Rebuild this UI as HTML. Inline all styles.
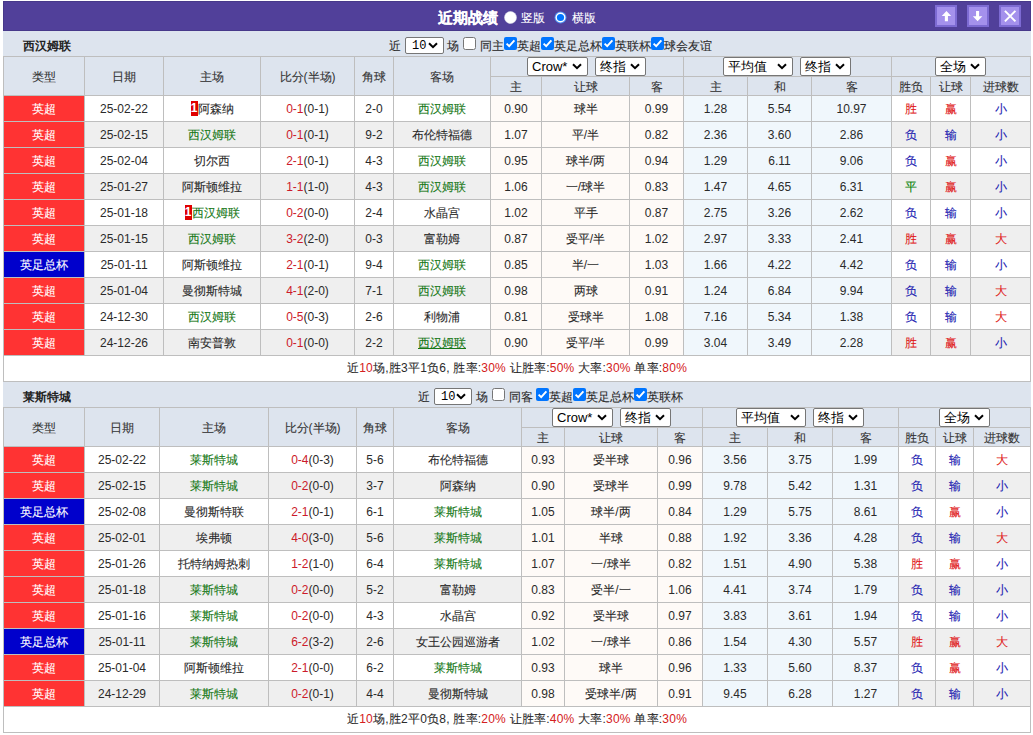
<!DOCTYPE html>
<html><head><meta charset="utf-8"><style>
html,body{margin:0;padding:0;background:#fff;}
body{width:1033px;height:735px;overflow:hidden;position:relative;font-family:"Liberation Sans",sans-serif;font-size:12px;color:#2a2a2a;}
body>div,body>svg{position:absolute;}
.t{text-align:center;white-space:nowrap;}
.c{-webkit-text-stroke:0.1px currentColor;}
.b .c{-webkit-text-stroke:0;}
.ttl .c{-webkit-text-stroke:0.15px #fff;}
.b{font-weight:bold;}
.sel{position:absolute;background:#fff;border:1px solid #767676;border-radius:2px;color:#000;}
.sel .sl{position:absolute;left:4px;top:0;}
.chev{position:absolute;}
.sel .num{font-family:"Liberation Mono",monospace;font-size:12px;left:6px;top:1px;}
.cb{position:absolute;}
.bd{display:inline-block;background:#e00000;color:#fff;font-weight:bold;width:7px;height:15px;line-height:15px;text-align:center;vertical-align:middle;position:relative;top:-1px;font-size:12px;}
</style></head><body>
<div style="left:3px;top:1px;width:1028px;height:30px;background:#51409a;box-sizing:border-box;border:1px solid #47398a"></div>
<div style="left:3px;top:31px;width:1028px;height:1px;background:#e6e2f6"></div>
<div class="t b ttl" style="left:438px;top:2px;height:30px;line-height:31px;font-size:15px;color:#fff;text-align:left;white-space:nowrap;-webkit-text-stroke:0.35px #fff"><span class="c">近期战绩</span></div>
<svg style="left:504px;top:11px" width="13" height="13" viewBox="0 0 13 13"><circle cx="6.5" cy="6.5" r="6" fill="#fff" stroke="#d8d8e8" stroke-width="0.6"/></svg>
<div class="t" style="left:521px;top:3px;height:30px;line-height:31px;color:#fff;text-align:left;white-space:nowrap"><span class="c">竖版</span></div>
<svg style="left:554px;top:11px" width="13" height="13" viewBox="0 0 13 13"><circle cx="6.5" cy="6.5" r="6" fill="#4a8cf0"/><circle cx="6.5" cy="6.5" r="5" fill="#fff"/><circle cx="6.5" cy="6.5" r="3.6" fill="#0075ff"/></svg>
<div class="t" style="left:572px;top:3px;height:30px;line-height:31px;color:#fff;text-align:left;white-space:nowrap"><span class="c">横版</span></div>
<svg style="left:935px;top:5px" width="22" height="22" viewBox="0 0 22 22"><rect x="0" y="0" width="22" height="22" fill="#7d6bd3"/><rect x="2" y="2" width="18" height="18" fill="#a491ec"/><path d="M11.45 6 L16.2 10.9 L12.95 10.9 L12.95 16.2 L9.85 16.2 L9.85 10.9 L6.75 10.9 Z" fill="#fff"/></svg>
<svg style="left:967px;top:5px" width="22" height="22" viewBox="0 0 22 22"><rect x="0" y="0" width="22" height="22" fill="#7d6bd3"/><rect x="2" y="2" width="18" height="18" fill="#a491ec"/><path d="M10.6 16.2 L15.35 11.25 L12.1 11.25 L12.1 5.9 L9.05 5.9 L9.05 11.25 L5.85 11.25 Z" fill="#fff"/></svg>
<svg style="left:999px;top:5px" width="22" height="22" viewBox="0 0 22 22"><rect x="0" y="0" width="22" height="22" fill="#7d6bd3"/><rect x="2" y="2" width="18" height="18" fill="#a491ec"/><path d="M5.9 5.9 L16.4 16.4 M16.4 5.9 L5.9 16.4" stroke="#fff" stroke-width="2"/></svg>
<div style="left:3px;top:31px;width:1028px;height:25px;background:#dde4ee;"></div>
<div class="t b" style="left:23px;top:33px;height:25px;line-height:26px;font-size:12px;color:#222"><span class="c">西汉姆联</span></div>
<div class="t" style="left:389px;top:38px;height:16px;line-height:16px;text-align:left;white-space:nowrap;"><span class="c">近</span></div>
<div class="sel" style="left:405px;top:37px;width:37px;height:15px;line-height:15px;font-size:13px"><span class="sl num">10</span><svg class="chev" width="10" height="7" viewBox="0 0 10 7" style="right:5px;top:4px"><path d="M1 1.2 L5 5.2 L9 1.2" fill="none" stroke="#000" stroke-width="2"/></svg></div>
<div class="t" style="left:447px;top:38px;height:16px;line-height:16px;text-align:left;white-space:nowrap;"><span class="c">场</span></div>
<svg class="cb" style="left:463px;top:37px" width="13" height="13" viewBox="0 0 13 13"><rect x="0.5" y="0.5" width="12" height="12" rx="2" fill="#fff" stroke="#767676"/></svg>
<div class="t" style="left:480px;top:38px;height:16px;line-height:16px;text-align:left;white-space:nowrap;"><span class="c">同主</span></div>
<svg class="cb" style="left:504px;top:37px" width="13" height="13" viewBox="0 0 13 13"><rect x="0" y="0" width="13" height="13" rx="2" fill="#0075ff"/><path d="M2.6 6.6 L5.2 9.2 L10.4 3.4" fill="none" stroke="#fff" stroke-width="1.9"/></svg>
<div class="t" style="left:517px;top:38px;height:16px;line-height:16px;text-align:left;white-space:nowrap;"><span class="c">英超</span></div>
<svg class="cb" style="left:541px;top:37px" width="13" height="13" viewBox="0 0 13 13"><rect x="0" y="0" width="13" height="13" rx="2" fill="#0075ff"/><path d="M2.6 6.6 L5.2 9.2 L10.4 3.4" fill="none" stroke="#fff" stroke-width="1.9"/></svg>
<div class="t" style="left:554px;top:38px;height:16px;line-height:16px;text-align:left;white-space:nowrap;"><span class="c">英足总杯</span></div>
<svg class="cb" style="left:602px;top:37px" width="13" height="13" viewBox="0 0 13 13"><rect x="0" y="0" width="13" height="13" rx="2" fill="#0075ff"/><path d="M2.6 6.6 L5.2 9.2 L10.4 3.4" fill="none" stroke="#fff" stroke-width="1.9"/></svg>
<div class="t" style="left:615px;top:38px;height:16px;line-height:16px;text-align:left;white-space:nowrap;"><span class="c">英联杯</span></div>
<svg class="cb" style="left:651px;top:37px" width="13" height="13" viewBox="0 0 13 13"><rect x="0" y="0" width="13" height="13" rx="2" fill="#0075ff"/><path d="M2.6 6.6 L5.2 9.2 L10.4 3.4" fill="none" stroke="#fff" stroke-width="1.9"/></svg>
<div class="t" style="left:664px;top:38px;height:16px;line-height:16px;text-align:left;white-space:nowrap;"><span class="c">球会友谊</span></div>
<div style="left:3px;top:56px;width:1028px;height:39px;background:#dde4ee;"></div>
<div style="left:3px;top:95px;width:1028px;height:26px;background:#ffffff;"></div>
<div style="left:490px;top:95px;width:193px;height:26px;background:#fefaf7;"></div>
<div style="left:683px;top:95px;width:208px;height:26px;background:#f0f7fc;"></div>
<div style="left:4px;top:95px;width:80px;height:26px;background:#ff3333;"></div>
<div style="left:3px;top:121px;width:1028px;height:26px;background:#efefef;"></div>
<div style="left:490px;top:121px;width:193px;height:26px;background:#fefaf7;"></div>
<div style="left:683px;top:121px;width:208px;height:26px;background:#f0f7fc;"></div>
<div style="left:4px;top:121px;width:80px;height:26px;background:#ff3333;"></div>
<div style="left:3px;top:147px;width:1028px;height:26px;background:#ffffff;"></div>
<div style="left:490px;top:147px;width:193px;height:26px;background:#fefaf7;"></div>
<div style="left:683px;top:147px;width:208px;height:26px;background:#f0f7fc;"></div>
<div style="left:4px;top:147px;width:80px;height:26px;background:#ff3333;"></div>
<div style="left:3px;top:173px;width:1028px;height:26px;background:#efefef;"></div>
<div style="left:490px;top:173px;width:193px;height:26px;background:#fefaf7;"></div>
<div style="left:683px;top:173px;width:208px;height:26px;background:#f0f7fc;"></div>
<div style="left:4px;top:173px;width:80px;height:26px;background:#ff3333;"></div>
<div style="left:3px;top:199px;width:1028px;height:26px;background:#ffffff;"></div>
<div style="left:490px;top:199px;width:193px;height:26px;background:#fefaf7;"></div>
<div style="left:683px;top:199px;width:208px;height:26px;background:#f0f7fc;"></div>
<div style="left:4px;top:199px;width:80px;height:26px;background:#ff3333;"></div>
<div style="left:3px;top:225px;width:1028px;height:26px;background:#efefef;"></div>
<div style="left:490px;top:225px;width:193px;height:26px;background:#fefaf7;"></div>
<div style="left:683px;top:225px;width:208px;height:26px;background:#f0f7fc;"></div>
<div style="left:4px;top:225px;width:80px;height:26px;background:#ff3333;"></div>
<div style="left:3px;top:251px;width:1028px;height:26px;background:#ffffff;"></div>
<div style="left:490px;top:251px;width:193px;height:26px;background:#fefaf7;"></div>
<div style="left:683px;top:251px;width:208px;height:26px;background:#f0f7fc;"></div>
<div style="left:4px;top:251px;width:80px;height:26px;background:#0000cc;"></div>
<div style="left:3px;top:277px;width:1028px;height:26px;background:#efefef;"></div>
<div style="left:490px;top:277px;width:193px;height:26px;background:#fefaf7;"></div>
<div style="left:683px;top:277px;width:208px;height:26px;background:#f0f7fc;"></div>
<div style="left:4px;top:277px;width:80px;height:26px;background:#ff3333;"></div>
<div style="left:3px;top:303px;width:1028px;height:26px;background:#ffffff;"></div>
<div style="left:490px;top:303px;width:193px;height:26px;background:#fefaf7;"></div>
<div style="left:683px;top:303px;width:208px;height:26px;background:#f0f7fc;"></div>
<div style="left:4px;top:303px;width:80px;height:26px;background:#ff3333;"></div>
<div style="left:3px;top:329px;width:1028px;height:26px;background:#efefef;"></div>
<div style="left:490px;top:329px;width:193px;height:26px;background:#fefaf7;"></div>
<div style="left:683px;top:329px;width:208px;height:26px;background:#f0f7fc;"></div>
<div style="left:4px;top:329px;width:80px;height:26px;background:#ff3333;"></div>
<div style="left:3px;top:56px;width:1028px;height:1px;background:#bebebe;"></div>
<div style="left:490px;top:76px;width:540px;height:1px;background:#bebebe;"></div>
<div style="left:3px;top:95px;width:1028px;height:1px;background:#bebebe;"></div>
<div style="left:3px;top:121px;width:1028px;height:1px;background:#bebebe;"></div>
<div style="left:3px;top:147px;width:1028px;height:1px;background:#bebebe;"></div>
<div style="left:3px;top:173px;width:1028px;height:1px;background:#bebebe;"></div>
<div style="left:3px;top:199px;width:1028px;height:1px;background:#bebebe;"></div>
<div style="left:3px;top:225px;width:1028px;height:1px;background:#bebebe;"></div>
<div style="left:3px;top:251px;width:1028px;height:1px;background:#bebebe;"></div>
<div style="left:3px;top:277px;width:1028px;height:1px;background:#bebebe;"></div>
<div style="left:3px;top:303px;width:1028px;height:1px;background:#bebebe;"></div>
<div style="left:3px;top:329px;width:1028px;height:1px;background:#bebebe;"></div>
<div style="left:3px;top:355px;width:1028px;height:1px;background:#bebebe;"></div>
<div style="left:3px;top:381px;width:1028px;height:1px;background:#bebebe;"></div>
<div style="left:3px;top:56px;width:1px;height:299px;background:#bebebe;"></div>
<div style="left:84px;top:56px;width:1px;height:299px;background:#bebebe;"></div>
<div style="left:163px;top:56px;width:1px;height:299px;background:#bebebe;"></div>
<div style="left:260px;top:56px;width:1px;height:299px;background:#bebebe;"></div>
<div style="left:354px;top:56px;width:1px;height:299px;background:#bebebe;"></div>
<div style="left:393px;top:56px;width:1px;height:299px;background:#bebebe;"></div>
<div style="left:490px;top:56px;width:1px;height:299px;background:#bebebe;"></div>
<div style="left:541px;top:76px;width:1px;height:279px;background:#bebebe;"></div>
<div style="left:629px;top:76px;width:1px;height:279px;background:#bebebe;"></div>
<div style="left:683px;top:56px;width:1px;height:299px;background:#bebebe;"></div>
<div style="left:747px;top:76px;width:1px;height:279px;background:#bebebe;"></div>
<div style="left:811px;top:76px;width:1px;height:279px;background:#bebebe;"></div>
<div style="left:891px;top:56px;width:1px;height:299px;background:#bebebe;"></div>
<div style="left:930px;top:76px;width:1px;height:279px;background:#bebebe;"></div>
<div style="left:970px;top:76px;width:1px;height:279px;background:#bebebe;"></div>
<div style="left:1030px;top:56px;width:1px;height:299px;background:#bebebe;"></div>
<div style="left:3px;top:355px;width:1px;height:27px;background:#bebebe;"></div>
<div style="left:1030px;top:355px;width:1px;height:27px;background:#bebebe;"></div>
<div class="t" style="left:4px;top:58px;width:80px;height:38px;line-height:38px;color:#333"><span class="c">类型</span></div>
<div class="t" style="left:85px;top:58px;width:78px;height:38px;line-height:38px;color:#333"><span class="c">日期</span></div>
<div class="t" style="left:164px;top:58px;width:96px;height:38px;line-height:38px;color:#333"><span class="c">主场</span></div>
<div class="t" style="left:261px;top:58px;width:93px;height:38px;line-height:38px;color:#333"><span class="c">比分</span>(<span class="c">半场</span>)</div>
<div class="t" style="left:355px;top:58px;width:38px;height:38px;line-height:38px;color:#333"><span class="c">角球</span></div>
<div class="t" style="left:394px;top:58px;width:96px;height:38px;line-height:38px;color:#333"><span class="c">客场</span></div>
<div class="t" style="left:491px;top:78px;width:50px;height:18px;line-height:18px;color:#333"><span class="c">主</span></div>
<div class="t" style="left:542px;top:78px;width:87px;height:18px;line-height:18px;color:#333"><span class="c">让球</span></div>
<div class="t" style="left:630px;top:78px;width:53px;height:18px;line-height:18px;color:#333"><span class="c">客</span></div>
<div class="t" style="left:684px;top:78px;width:63px;height:18px;line-height:18px;color:#333"><span class="c">主</span></div>
<div class="t" style="left:748px;top:78px;width:63px;height:18px;line-height:18px;color:#333"><span class="c">和</span></div>
<div class="t" style="left:812px;top:78px;width:79px;height:18px;line-height:18px;color:#333"><span class="c">客</span></div>
<div class="t" style="left:892px;top:78px;width:38px;height:18px;line-height:18px;color:#333"><span class="c">胜负</span></div>
<div class="t" style="left:931px;top:78px;width:39px;height:18px;line-height:18px;color:#333"><span class="c">让球</span></div>
<div class="t" style="left:971px;top:78px;width:59px;height:18px;line-height:18px;color:#333"><span class="c">进球数</span></div>
<div class="sel" style="left:527px;top:57px;width:59px;height:17px;line-height:17px;font-size:13px"><span class="sl">Crow*</span><svg class="chev" width="10" height="7" viewBox="0 0 10 7" style="right:5px;top:5px"><path d="M1 1.2 L5 5.2 L9 1.2" fill="none" stroke="#000" stroke-width="2"/></svg></div>
<div class="sel" style="left:595px;top:57px;width:49px;height:17px;line-height:17px;font-size:13px"><span class="sl">终指</span><svg class="chev" width="10" height="7" viewBox="0 0 10 7" style="right:5px;top:5px"><path d="M1 1.2 L5 5.2 L9 1.2" fill="none" stroke="#000" stroke-width="2"/></svg></div>
<div class="sel" style="left:723px;top:57px;width:68px;height:17px;line-height:17px;font-size:13px"><span class="sl">平均值</span><svg class="chev" width="10" height="7" viewBox="0 0 10 7" style="right:5px;top:5px"><path d="M1 1.2 L5 5.2 L9 1.2" fill="none" stroke="#000" stroke-width="2"/></svg></div>
<div class="sel" style="left:800px;top:57px;width:49px;height:17px;line-height:17px;font-size:13px"><span class="sl">终指</span><svg class="chev" width="10" height="7" viewBox="0 0 10 7" style="right:5px;top:5px"><path d="M1 1.2 L5 5.2 L9 1.2" fill="none" stroke="#000" stroke-width="2"/></svg></div>
<div class="sel" style="left:935px;top:57px;width:49px;height:17px;line-height:17px;font-size:13px"><span class="sl">全场</span><svg class="chev" width="10" height="7" viewBox="0 0 10 7" style="right:5px;top:5px"><path d="M1 1.2 L5 5.2 L9 1.2" fill="none" stroke="#000" stroke-width="2"/></svg></div>
<div class="t" style="left:4px;top:97px;width:80px;height:25px;line-height:25px;color:#fff"><span class="c">英超</span></div>
<div class="t" style="left:85px;top:97px;width:78px;height:25px;line-height:25px;">25-02-22</div>
<div class="t" style="left:164px;top:97px;width:96px;height:25px;line-height:25px;"><span class="bd">1</span><span class="c">阿森纳</span></div>
<div class="t" style="left:261px;top:97px;width:93px;height:25px;line-height:25px;"><span style="color:#cc1a2a">0-1</span>(0-1)</div>
<div class="t" style="left:355px;top:97px;width:38px;height:25px;line-height:25px;">2-0</div>
<div class="t" style="left:394px;top:97px;width:96px;height:25px;line-height:25px;"><span style="color:#167816"><span class="c">西汉姆联</span></span></div>
<div class="t" style="left:491px;top:97px;width:50px;height:25px;line-height:25px;">0.90</div>
<div class="t" style="left:542px;top:97px;width:87px;height:25px;line-height:25px;"><span class="c">球半</span></div>
<div class="t" style="left:630px;top:97px;width:53px;height:25px;line-height:25px;">0.99</div>
<div class="t" style="left:684px;top:97px;width:63px;height:25px;line-height:25px;">1.28</div>
<div class="t" style="left:748px;top:97px;width:63px;height:25px;line-height:25px;">5.54</div>
<div class="t" style="left:812px;top:97px;width:79px;height:25px;line-height:25px;">10.97</div>
<div class="t" style="left:892px;top:97px;width:38px;height:25px;line-height:25px;"><span style="color:#e01818"><span class="c">胜</span></span></div>
<div class="t" style="left:931px;top:97px;width:39px;height:25px;line-height:25px;"><span style="color:#e01818"><span class="c">赢</span></span></div>
<div class="t" style="left:971px;top:97px;width:59px;height:25px;line-height:25px;"><span style="color:#1818b0"><span class="c">小</span></span></div>
<div class="t" style="left:4px;top:123px;width:80px;height:25px;line-height:25px;color:#fff"><span class="c">英超</span></div>
<div class="t" style="left:85px;top:123px;width:78px;height:25px;line-height:25px;">25-02-15</div>
<div class="t" style="left:164px;top:123px;width:96px;height:25px;line-height:25px;"><span style="color:#167816"><span class="c">西汉姆联</span></span></div>
<div class="t" style="left:261px;top:123px;width:93px;height:25px;line-height:25px;"><span style="color:#cc1a2a">0-1</span>(0-1)</div>
<div class="t" style="left:355px;top:123px;width:38px;height:25px;line-height:25px;">9-2</div>
<div class="t" style="left:394px;top:123px;width:96px;height:25px;line-height:25px;"><span class="c">布伦特福德</span></div>
<div class="t" style="left:491px;top:123px;width:50px;height:25px;line-height:25px;">1.07</div>
<div class="t" style="left:542px;top:123px;width:87px;height:25px;line-height:25px;"><span class="c">平</span>/<span class="c">半</span></div>
<div class="t" style="left:630px;top:123px;width:53px;height:25px;line-height:25px;">0.82</div>
<div class="t" style="left:684px;top:123px;width:63px;height:25px;line-height:25px;">2.36</div>
<div class="t" style="left:748px;top:123px;width:63px;height:25px;line-height:25px;">3.60</div>
<div class="t" style="left:812px;top:123px;width:79px;height:25px;line-height:25px;">2.86</div>
<div class="t" style="left:892px;top:123px;width:38px;height:25px;line-height:25px;"><span style="color:#1818b0"><span class="c">负</span></span></div>
<div class="t" style="left:931px;top:123px;width:39px;height:25px;line-height:25px;"><span style="color:#1818b0"><span class="c">输</span></span></div>
<div class="t" style="left:971px;top:123px;width:59px;height:25px;line-height:25px;"><span style="color:#1818b0"><span class="c">小</span></span></div>
<div class="t" style="left:4px;top:149px;width:80px;height:25px;line-height:25px;color:#fff"><span class="c">英超</span></div>
<div class="t" style="left:85px;top:149px;width:78px;height:25px;line-height:25px;">25-02-04</div>
<div class="t" style="left:164px;top:149px;width:96px;height:25px;line-height:25px;"><span class="c">切尔西</span></div>
<div class="t" style="left:261px;top:149px;width:93px;height:25px;line-height:25px;"><span style="color:#cc1a2a">2-1</span>(0-1)</div>
<div class="t" style="left:355px;top:149px;width:38px;height:25px;line-height:25px;">4-3</div>
<div class="t" style="left:394px;top:149px;width:96px;height:25px;line-height:25px;"><span style="color:#167816"><span class="c">西汉姆联</span></span></div>
<div class="t" style="left:491px;top:149px;width:50px;height:25px;line-height:25px;">0.95</div>
<div class="t" style="left:542px;top:149px;width:87px;height:25px;line-height:25px;"><span class="c">球半</span>/<span class="c">两</span></div>
<div class="t" style="left:630px;top:149px;width:53px;height:25px;line-height:25px;">0.94</div>
<div class="t" style="left:684px;top:149px;width:63px;height:25px;line-height:25px;">1.29</div>
<div class="t" style="left:748px;top:149px;width:63px;height:25px;line-height:25px;">6.11</div>
<div class="t" style="left:812px;top:149px;width:79px;height:25px;line-height:25px;">9.06</div>
<div class="t" style="left:892px;top:149px;width:38px;height:25px;line-height:25px;"><span style="color:#1818b0"><span class="c">负</span></span></div>
<div class="t" style="left:931px;top:149px;width:39px;height:25px;line-height:25px;"><span style="color:#e01818"><span class="c">赢</span></span></div>
<div class="t" style="left:971px;top:149px;width:59px;height:25px;line-height:25px;"><span style="color:#1818b0"><span class="c">小</span></span></div>
<div class="t" style="left:4px;top:175px;width:80px;height:25px;line-height:25px;color:#fff"><span class="c">英超</span></div>
<div class="t" style="left:85px;top:175px;width:78px;height:25px;line-height:25px;">25-01-27</div>
<div class="t" style="left:164px;top:175px;width:96px;height:25px;line-height:25px;"><span class="c">阿斯顿维拉</span></div>
<div class="t" style="left:261px;top:175px;width:93px;height:25px;line-height:25px;"><span style="color:#cc1a2a">1-1</span>(1-0)</div>
<div class="t" style="left:355px;top:175px;width:38px;height:25px;line-height:25px;">4-3</div>
<div class="t" style="left:394px;top:175px;width:96px;height:25px;line-height:25px;"><span style="color:#167816"><span class="c">西汉姆联</span></span></div>
<div class="t" style="left:491px;top:175px;width:50px;height:25px;line-height:25px;">1.06</div>
<div class="t" style="left:542px;top:175px;width:87px;height:25px;line-height:25px;"><span class="c">一</span>/<span class="c">球半</span></div>
<div class="t" style="left:630px;top:175px;width:53px;height:25px;line-height:25px;">0.83</div>
<div class="t" style="left:684px;top:175px;width:63px;height:25px;line-height:25px;">1.47</div>
<div class="t" style="left:748px;top:175px;width:63px;height:25px;line-height:25px;">4.65</div>
<div class="t" style="left:812px;top:175px;width:79px;height:25px;line-height:25px;">6.31</div>
<div class="t" style="left:892px;top:175px;width:38px;height:25px;line-height:25px;"><span style="color:#008000"><span class="c">平</span></span></div>
<div class="t" style="left:931px;top:175px;width:39px;height:25px;line-height:25px;"><span style="color:#e01818"><span class="c">赢</span></span></div>
<div class="t" style="left:971px;top:175px;width:59px;height:25px;line-height:25px;"><span style="color:#1818b0"><span class="c">小</span></span></div>
<div class="t" style="left:4px;top:201px;width:80px;height:25px;line-height:25px;color:#fff"><span class="c">英超</span></div>
<div class="t" style="left:85px;top:201px;width:78px;height:25px;line-height:25px;">25-01-18</div>
<div class="t" style="left:164px;top:201px;width:96px;height:25px;line-height:25px;"><span class="bd">1</span><span style="color:#167816"><span class="c">西汉姆联</span></span></div>
<div class="t" style="left:261px;top:201px;width:93px;height:25px;line-height:25px;"><span style="color:#cc1a2a">0-2</span>(0-0)</div>
<div class="t" style="left:355px;top:201px;width:38px;height:25px;line-height:25px;">2-4</div>
<div class="t" style="left:394px;top:201px;width:96px;height:25px;line-height:25px;"><span class="c">水晶宫</span></div>
<div class="t" style="left:491px;top:201px;width:50px;height:25px;line-height:25px;">1.02</div>
<div class="t" style="left:542px;top:201px;width:87px;height:25px;line-height:25px;"><span class="c">平手</span></div>
<div class="t" style="left:630px;top:201px;width:53px;height:25px;line-height:25px;">0.87</div>
<div class="t" style="left:684px;top:201px;width:63px;height:25px;line-height:25px;">2.75</div>
<div class="t" style="left:748px;top:201px;width:63px;height:25px;line-height:25px;">3.26</div>
<div class="t" style="left:812px;top:201px;width:79px;height:25px;line-height:25px;">2.62</div>
<div class="t" style="left:892px;top:201px;width:38px;height:25px;line-height:25px;"><span style="color:#1818b0"><span class="c">负</span></span></div>
<div class="t" style="left:931px;top:201px;width:39px;height:25px;line-height:25px;"><span style="color:#1818b0"><span class="c">输</span></span></div>
<div class="t" style="left:971px;top:201px;width:59px;height:25px;line-height:25px;"><span style="color:#1818b0"><span class="c">小</span></span></div>
<div class="t" style="left:4px;top:227px;width:80px;height:25px;line-height:25px;color:#fff"><span class="c">英超</span></div>
<div class="t" style="left:85px;top:227px;width:78px;height:25px;line-height:25px;">25-01-15</div>
<div class="t" style="left:164px;top:227px;width:96px;height:25px;line-height:25px;"><span style="color:#167816"><span class="c">西汉姆联</span></span></div>
<div class="t" style="left:261px;top:227px;width:93px;height:25px;line-height:25px;"><span style="color:#cc1a2a">3-2</span>(2-0)</div>
<div class="t" style="left:355px;top:227px;width:38px;height:25px;line-height:25px;">0-3</div>
<div class="t" style="left:394px;top:227px;width:96px;height:25px;line-height:25px;"><span class="c">富勒姆</span></div>
<div class="t" style="left:491px;top:227px;width:50px;height:25px;line-height:25px;">0.87</div>
<div class="t" style="left:542px;top:227px;width:87px;height:25px;line-height:25px;"><span class="c">受平</span>/<span class="c">半</span></div>
<div class="t" style="left:630px;top:227px;width:53px;height:25px;line-height:25px;">1.02</div>
<div class="t" style="left:684px;top:227px;width:63px;height:25px;line-height:25px;">2.97</div>
<div class="t" style="left:748px;top:227px;width:63px;height:25px;line-height:25px;">3.33</div>
<div class="t" style="left:812px;top:227px;width:79px;height:25px;line-height:25px;">2.41</div>
<div class="t" style="left:892px;top:227px;width:38px;height:25px;line-height:25px;"><span style="color:#e01818"><span class="c">胜</span></span></div>
<div class="t" style="left:931px;top:227px;width:39px;height:25px;line-height:25px;"><span style="color:#e01818"><span class="c">赢</span></span></div>
<div class="t" style="left:971px;top:227px;width:59px;height:25px;line-height:25px;"><span style="color:#e01818"><span class="c">大</span></span></div>
<div class="t" style="left:4px;top:253px;width:80px;height:25px;line-height:25px;color:#fff"><span class="c">英足总杯</span></div>
<div class="t" style="left:85px;top:253px;width:78px;height:25px;line-height:25px;">25-01-11</div>
<div class="t" style="left:164px;top:253px;width:96px;height:25px;line-height:25px;"><span class="c">阿斯顿维拉</span></div>
<div class="t" style="left:261px;top:253px;width:93px;height:25px;line-height:25px;"><span style="color:#cc1a2a">2-1</span>(0-1)</div>
<div class="t" style="left:355px;top:253px;width:38px;height:25px;line-height:25px;">9-4</div>
<div class="t" style="left:394px;top:253px;width:96px;height:25px;line-height:25px;"><span style="color:#167816"><span class="c">西汉姆联</span></span></div>
<div class="t" style="left:491px;top:253px;width:50px;height:25px;line-height:25px;">0.85</div>
<div class="t" style="left:542px;top:253px;width:87px;height:25px;line-height:25px;"><span class="c">半</span>/<span class="c">一</span></div>
<div class="t" style="left:630px;top:253px;width:53px;height:25px;line-height:25px;">1.03</div>
<div class="t" style="left:684px;top:253px;width:63px;height:25px;line-height:25px;">1.66</div>
<div class="t" style="left:748px;top:253px;width:63px;height:25px;line-height:25px;">4.22</div>
<div class="t" style="left:812px;top:253px;width:79px;height:25px;line-height:25px;">4.42</div>
<div class="t" style="left:892px;top:253px;width:38px;height:25px;line-height:25px;"><span style="color:#1818b0"><span class="c">负</span></span></div>
<div class="t" style="left:931px;top:253px;width:39px;height:25px;line-height:25px;"><span style="color:#1818b0"><span class="c">输</span></span></div>
<div class="t" style="left:971px;top:253px;width:59px;height:25px;line-height:25px;"><span style="color:#1818b0"><span class="c">小</span></span></div>
<div class="t" style="left:4px;top:279px;width:80px;height:25px;line-height:25px;color:#fff"><span class="c">英超</span></div>
<div class="t" style="left:85px;top:279px;width:78px;height:25px;line-height:25px;">25-01-04</div>
<div class="t" style="left:164px;top:279px;width:96px;height:25px;line-height:25px;"><span class="c">曼彻斯特城</span></div>
<div class="t" style="left:261px;top:279px;width:93px;height:25px;line-height:25px;"><span style="color:#cc1a2a">4-1</span>(2-0)</div>
<div class="t" style="left:355px;top:279px;width:38px;height:25px;line-height:25px;">7-1</div>
<div class="t" style="left:394px;top:279px;width:96px;height:25px;line-height:25px;"><span style="color:#167816"><span class="c">西汉姆联</span></span></div>
<div class="t" style="left:491px;top:279px;width:50px;height:25px;line-height:25px;">0.98</div>
<div class="t" style="left:542px;top:279px;width:87px;height:25px;line-height:25px;"><span class="c">两球</span></div>
<div class="t" style="left:630px;top:279px;width:53px;height:25px;line-height:25px;">0.91</div>
<div class="t" style="left:684px;top:279px;width:63px;height:25px;line-height:25px;">1.24</div>
<div class="t" style="left:748px;top:279px;width:63px;height:25px;line-height:25px;">6.84</div>
<div class="t" style="left:812px;top:279px;width:79px;height:25px;line-height:25px;">9.94</div>
<div class="t" style="left:892px;top:279px;width:38px;height:25px;line-height:25px;"><span style="color:#1818b0"><span class="c">负</span></span></div>
<div class="t" style="left:931px;top:279px;width:39px;height:25px;line-height:25px;"><span style="color:#1818b0"><span class="c">输</span></span></div>
<div class="t" style="left:971px;top:279px;width:59px;height:25px;line-height:25px;"><span style="color:#e01818"><span class="c">大</span></span></div>
<div class="t" style="left:4px;top:305px;width:80px;height:25px;line-height:25px;color:#fff"><span class="c">英超</span></div>
<div class="t" style="left:85px;top:305px;width:78px;height:25px;line-height:25px;">24-12-30</div>
<div class="t" style="left:164px;top:305px;width:96px;height:25px;line-height:25px;"><span style="color:#167816"><span class="c">西汉姆联</span></span></div>
<div class="t" style="left:261px;top:305px;width:93px;height:25px;line-height:25px;"><span style="color:#cc1a2a">0-5</span>(0-3)</div>
<div class="t" style="left:355px;top:305px;width:38px;height:25px;line-height:25px;">2-6</div>
<div class="t" style="left:394px;top:305px;width:96px;height:25px;line-height:25px;"><span class="c">利物浦</span></div>
<div class="t" style="left:491px;top:305px;width:50px;height:25px;line-height:25px;">0.81</div>
<div class="t" style="left:542px;top:305px;width:87px;height:25px;line-height:25px;"><span class="c">受球半</span></div>
<div class="t" style="left:630px;top:305px;width:53px;height:25px;line-height:25px;">1.08</div>
<div class="t" style="left:684px;top:305px;width:63px;height:25px;line-height:25px;">7.16</div>
<div class="t" style="left:748px;top:305px;width:63px;height:25px;line-height:25px;">5.34</div>
<div class="t" style="left:812px;top:305px;width:79px;height:25px;line-height:25px;">1.38</div>
<div class="t" style="left:892px;top:305px;width:38px;height:25px;line-height:25px;"><span style="color:#1818b0"><span class="c">负</span></span></div>
<div class="t" style="left:931px;top:305px;width:39px;height:25px;line-height:25px;"><span style="color:#1818b0"><span class="c">输</span></span></div>
<div class="t" style="left:971px;top:305px;width:59px;height:25px;line-height:25px;"><span style="color:#e01818"><span class="c">大</span></span></div>
<div class="t" style="left:4px;top:331px;width:80px;height:25px;line-height:25px;color:#fff"><span class="c">英超</span></div>
<div class="t" style="left:85px;top:331px;width:78px;height:25px;line-height:25px;">24-12-26</div>
<div class="t" style="left:164px;top:331px;width:96px;height:25px;line-height:25px;"><span class="c">南安普敦</span></div>
<div class="t" style="left:261px;top:331px;width:93px;height:25px;line-height:25px;"><span style="color:#cc1a2a">0-1</span>(0-0)</div>
<div class="t" style="left:355px;top:331px;width:38px;height:25px;line-height:25px;">2-2</div>
<div class="t" style="left:394px;top:331px;width:96px;height:25px;line-height:25px;"><span style="color:#167816;text-decoration:underline"><span class="c">西汉姆联</span></span></div>
<div class="t" style="left:491px;top:331px;width:50px;height:25px;line-height:25px;">0.90</div>
<div class="t" style="left:542px;top:331px;width:87px;height:25px;line-height:25px;"><span class="c">受平</span>/<span class="c">半</span></div>
<div class="t" style="left:630px;top:331px;width:53px;height:25px;line-height:25px;">0.99</div>
<div class="t" style="left:684px;top:331px;width:63px;height:25px;line-height:25px;">3.04</div>
<div class="t" style="left:748px;top:331px;width:63px;height:25px;line-height:25px;">3.49</div>
<div class="t" style="left:812px;top:331px;width:79px;height:25px;line-height:25px;">2.28</div>
<div class="t" style="left:892px;top:331px;width:38px;height:25px;line-height:25px;"><span style="color:#e01818"><span class="c">胜</span></span></div>
<div class="t" style="left:931px;top:331px;width:39px;height:25px;line-height:25px;"><span style="color:#e01818"><span class="c">赢</span></span></div>
<div class="t" style="left:971px;top:331px;width:59px;height:25px;line-height:25px;"><span style="color:#1818b0"><span class="c">小</span></span></div>
<div class="t" style="left:3px;top:356px;width:1028px;height:25px;line-height:25px;white-space:nowrap;letter-spacing:0.22px"><span class="c">近</span><span style="color:#d42020">10</span><span class="c">场</span>,<span class="c">胜</span>3<span class="c">平</span>1<span class="c">负</span>6, <span class="c">胜率</span>:<span style="color:#d42020">30%</span> <span class="c">让胜率</span>:<span style="color:#d42020">50%</span> <span class="c">大率</span>:<span style="color:#d42020">30%</span> <span class="c">单率</span>:<span style="color:#d42020">80%</span></div>
<div style="left:3px;top:382px;width:1028px;height:25px;background:#dde4ee;"></div>
<div class="t b" style="left:23px;top:384px;height:25px;line-height:26px;font-size:12px;color:#222"><span class="c">莱斯特城</span></div>
<div class="t" style="left:418px;top:389px;height:16px;line-height:16px;text-align:left;white-space:nowrap;"><span class="c">近</span></div>
<div class="sel" style="left:434px;top:388px;width:36px;height:15px;line-height:15px;font-size:13px"><span class="sl num">10</span><svg class="chev" width="10" height="7" viewBox="0 0 10 7" style="right:5px;top:4px"><path d="M1 1.2 L5 5.2 L9 1.2" fill="none" stroke="#000" stroke-width="2"/></svg></div>
<div class="t" style="left:476px;top:389px;height:16px;line-height:16px;text-align:left;white-space:nowrap;"><span class="c">场</span></div>
<svg class="cb" style="left:492px;top:388px" width="13" height="13" viewBox="0 0 13 13"><rect x="0.5" y="0.5" width="12" height="12" rx="2" fill="#fff" stroke="#767676"/></svg>
<div class="t" style="left:509px;top:389px;height:16px;line-height:16px;text-align:left;white-space:nowrap;"><span class="c">同客</span></div>
<svg class="cb" style="left:536px;top:388px" width="13" height="13" viewBox="0 0 13 13"><rect x="0" y="0" width="13" height="13" rx="2" fill="#0075ff"/><path d="M2.6 6.6 L5.2 9.2 L10.4 3.4" fill="none" stroke="#fff" stroke-width="1.9"/></svg>
<div class="t" style="left:549px;top:389px;height:16px;line-height:16px;text-align:left;white-space:nowrap;"><span class="c">英超</span></div>
<svg class="cb" style="left:573px;top:388px" width="13" height="13" viewBox="0 0 13 13"><rect x="0" y="0" width="13" height="13" rx="2" fill="#0075ff"/><path d="M2.6 6.6 L5.2 9.2 L10.4 3.4" fill="none" stroke="#fff" stroke-width="1.9"/></svg>
<div class="t" style="left:586px;top:389px;height:16px;line-height:16px;text-align:left;white-space:nowrap;"><span class="c">英足总杯</span></div>
<svg class="cb" style="left:634px;top:388px" width="13" height="13" viewBox="0 0 13 13"><rect x="0" y="0" width="13" height="13" rx="2" fill="#0075ff"/><path d="M2.6 6.6 L5.2 9.2 L10.4 3.4" fill="none" stroke="#fff" stroke-width="1.9"/></svg>
<div class="t" style="left:647px;top:389px;height:16px;line-height:16px;text-align:left;white-space:nowrap;"><span class="c">英联杯</span></div>
<div style="left:3px;top:407px;width:1028px;height:39px;background:#dde4ee;"></div>
<div style="left:3px;top:446px;width:1028px;height:26px;background:#ffffff;"></div>
<div style="left:521px;top:446px;width:181px;height:26px;background:#fefaf7;"></div>
<div style="left:702px;top:446px;width:196px;height:26px;background:#f0f7fc;"></div>
<div style="left:4px;top:446px;width:80px;height:26px;background:#ff3333;"></div>
<div style="left:3px;top:472px;width:1028px;height:26px;background:#efefef;"></div>
<div style="left:521px;top:472px;width:181px;height:26px;background:#fefaf7;"></div>
<div style="left:702px;top:472px;width:196px;height:26px;background:#f0f7fc;"></div>
<div style="left:4px;top:472px;width:80px;height:26px;background:#ff3333;"></div>
<div style="left:3px;top:498px;width:1028px;height:26px;background:#ffffff;"></div>
<div style="left:521px;top:498px;width:181px;height:26px;background:#fefaf7;"></div>
<div style="left:702px;top:498px;width:196px;height:26px;background:#f0f7fc;"></div>
<div style="left:4px;top:498px;width:80px;height:26px;background:#0000cc;"></div>
<div style="left:3px;top:524px;width:1028px;height:26px;background:#efefef;"></div>
<div style="left:521px;top:524px;width:181px;height:26px;background:#fefaf7;"></div>
<div style="left:702px;top:524px;width:196px;height:26px;background:#f0f7fc;"></div>
<div style="left:4px;top:524px;width:80px;height:26px;background:#ff3333;"></div>
<div style="left:3px;top:550px;width:1028px;height:26px;background:#ffffff;"></div>
<div style="left:521px;top:550px;width:181px;height:26px;background:#fefaf7;"></div>
<div style="left:702px;top:550px;width:196px;height:26px;background:#f0f7fc;"></div>
<div style="left:4px;top:550px;width:80px;height:26px;background:#ff3333;"></div>
<div style="left:3px;top:576px;width:1028px;height:26px;background:#efefef;"></div>
<div style="left:521px;top:576px;width:181px;height:26px;background:#fefaf7;"></div>
<div style="left:702px;top:576px;width:196px;height:26px;background:#f0f7fc;"></div>
<div style="left:4px;top:576px;width:80px;height:26px;background:#ff3333;"></div>
<div style="left:3px;top:602px;width:1028px;height:26px;background:#ffffff;"></div>
<div style="left:521px;top:602px;width:181px;height:26px;background:#fefaf7;"></div>
<div style="left:702px;top:602px;width:196px;height:26px;background:#f0f7fc;"></div>
<div style="left:4px;top:602px;width:80px;height:26px;background:#ff3333;"></div>
<div style="left:3px;top:628px;width:1028px;height:26px;background:#efefef;"></div>
<div style="left:521px;top:628px;width:181px;height:26px;background:#fefaf7;"></div>
<div style="left:702px;top:628px;width:196px;height:26px;background:#f0f7fc;"></div>
<div style="left:4px;top:628px;width:80px;height:26px;background:#0000cc;"></div>
<div style="left:3px;top:654px;width:1028px;height:26px;background:#ffffff;"></div>
<div style="left:521px;top:654px;width:181px;height:26px;background:#fefaf7;"></div>
<div style="left:702px;top:654px;width:196px;height:26px;background:#f0f7fc;"></div>
<div style="left:4px;top:654px;width:80px;height:26px;background:#ff3333;"></div>
<div style="left:3px;top:680px;width:1028px;height:26px;background:#efefef;"></div>
<div style="left:521px;top:680px;width:181px;height:26px;background:#fefaf7;"></div>
<div style="left:702px;top:680px;width:196px;height:26px;background:#f0f7fc;"></div>
<div style="left:4px;top:680px;width:80px;height:26px;background:#ff3333;"></div>
<div style="left:3px;top:407px;width:1028px;height:1px;background:#bebebe;"></div>
<div style="left:521px;top:427px;width:509px;height:1px;background:#bebebe;"></div>
<div style="left:3px;top:446px;width:1028px;height:1px;background:#bebebe;"></div>
<div style="left:3px;top:472px;width:1028px;height:1px;background:#bebebe;"></div>
<div style="left:3px;top:498px;width:1028px;height:1px;background:#bebebe;"></div>
<div style="left:3px;top:524px;width:1028px;height:1px;background:#bebebe;"></div>
<div style="left:3px;top:550px;width:1028px;height:1px;background:#bebebe;"></div>
<div style="left:3px;top:576px;width:1028px;height:1px;background:#bebebe;"></div>
<div style="left:3px;top:602px;width:1028px;height:1px;background:#bebebe;"></div>
<div style="left:3px;top:628px;width:1028px;height:1px;background:#bebebe;"></div>
<div style="left:3px;top:654px;width:1028px;height:1px;background:#bebebe;"></div>
<div style="left:3px;top:680px;width:1028px;height:1px;background:#bebebe;"></div>
<div style="left:3px;top:706px;width:1028px;height:1px;background:#bebebe;"></div>
<div style="left:3px;top:732px;width:1028px;height:1px;background:#bebebe;"></div>
<div style="left:3px;top:407px;width:1px;height:299px;background:#bebebe;"></div>
<div style="left:84px;top:407px;width:1px;height:299px;background:#bebebe;"></div>
<div style="left:159px;top:407px;width:1px;height:299px;background:#bebebe;"></div>
<div style="left:268px;top:407px;width:1px;height:299px;background:#bebebe;"></div>
<div style="left:356px;top:407px;width:1px;height:299px;background:#bebebe;"></div>
<div style="left:393px;top:407px;width:1px;height:299px;background:#bebebe;"></div>
<div style="left:521px;top:407px;width:1px;height:299px;background:#bebebe;"></div>
<div style="left:564px;top:427px;width:1px;height:279px;background:#bebebe;"></div>
<div style="left:657px;top:427px;width:1px;height:279px;background:#bebebe;"></div>
<div style="left:702px;top:407px;width:1px;height:299px;background:#bebebe;"></div>
<div style="left:767px;top:427px;width:1px;height:279px;background:#bebebe;"></div>
<div style="left:832px;top:427px;width:1px;height:279px;background:#bebebe;"></div>
<div style="left:898px;top:407px;width:1px;height:299px;background:#bebebe;"></div>
<div style="left:935px;top:427px;width:1px;height:279px;background:#bebebe;"></div>
<div style="left:973px;top:427px;width:1px;height:279px;background:#bebebe;"></div>
<div style="left:1030px;top:407px;width:1px;height:299px;background:#bebebe;"></div>
<div style="left:3px;top:706px;width:1px;height:27px;background:#bebebe;"></div>
<div style="left:1030px;top:706px;width:1px;height:27px;background:#bebebe;"></div>
<div class="t" style="left:4px;top:409px;width:80px;height:38px;line-height:38px;color:#333"><span class="c">类型</span></div>
<div class="t" style="left:85px;top:409px;width:74px;height:38px;line-height:38px;color:#333"><span class="c">日期</span></div>
<div class="t" style="left:160px;top:409px;width:108px;height:38px;line-height:38px;color:#333"><span class="c">主场</span></div>
<div class="t" style="left:269px;top:409px;width:87px;height:38px;line-height:38px;color:#333"><span class="c">比分</span>(<span class="c">半场</span>)</div>
<div class="t" style="left:357px;top:409px;width:36px;height:38px;line-height:38px;color:#333"><span class="c">角球</span></div>
<div class="t" style="left:394px;top:409px;width:127px;height:38px;line-height:38px;color:#333"><span class="c">客场</span></div>
<div class="t" style="left:522px;top:429px;width:42px;height:18px;line-height:18px;color:#333"><span class="c">主</span></div>
<div class="t" style="left:565px;top:429px;width:92px;height:18px;line-height:18px;color:#333"><span class="c">让球</span></div>
<div class="t" style="left:658px;top:429px;width:44px;height:18px;line-height:18px;color:#333"><span class="c">客</span></div>
<div class="t" style="left:703px;top:429px;width:64px;height:18px;line-height:18px;color:#333"><span class="c">主</span></div>
<div class="t" style="left:768px;top:429px;width:64px;height:18px;line-height:18px;color:#333"><span class="c">和</span></div>
<div class="t" style="left:833px;top:429px;width:65px;height:18px;line-height:18px;color:#333"><span class="c">客</span></div>
<div class="t" style="left:899px;top:429px;width:36px;height:18px;line-height:18px;color:#333"><span class="c">胜负</span></div>
<div class="t" style="left:936px;top:429px;width:37px;height:18px;line-height:18px;color:#333"><span class="c">让球</span></div>
<div class="t" style="left:974px;top:429px;width:56px;height:18px;line-height:18px;color:#333"><span class="c">进球数</span></div>
<div class="sel" style="left:552px;top:408px;width:59px;height:17px;line-height:17px;font-size:13px"><span class="sl">Crow*</span><svg class="chev" width="10" height="7" viewBox="0 0 10 7" style="right:5px;top:5px"><path d="M1 1.2 L5 5.2 L9 1.2" fill="none" stroke="#000" stroke-width="2"/></svg></div>
<div class="sel" style="left:620px;top:408px;width:49px;height:17px;line-height:17px;font-size:13px"><span class="sl">终指</span><svg class="chev" width="10" height="7" viewBox="0 0 10 7" style="right:5px;top:5px"><path d="M1 1.2 L5 5.2 L9 1.2" fill="none" stroke="#000" stroke-width="2"/></svg></div>
<div class="sel" style="left:736px;top:408px;width:68px;height:17px;line-height:17px;font-size:13px"><span class="sl">平均值</span><svg class="chev" width="10" height="7" viewBox="0 0 10 7" style="right:5px;top:5px"><path d="M1 1.2 L5 5.2 L9 1.2" fill="none" stroke="#000" stroke-width="2"/></svg></div>
<div class="sel" style="left:813px;top:408px;width:49px;height:17px;line-height:17px;font-size:13px"><span class="sl">终指</span><svg class="chev" width="10" height="7" viewBox="0 0 10 7" style="right:5px;top:5px"><path d="M1 1.2 L5 5.2 L9 1.2" fill="none" stroke="#000" stroke-width="2"/></svg></div>
<div class="sel" style="left:939px;top:408px;width:49px;height:17px;line-height:17px;font-size:13px"><span class="sl">全场</span><svg class="chev" width="10" height="7" viewBox="0 0 10 7" style="right:5px;top:5px"><path d="M1 1.2 L5 5.2 L9 1.2" fill="none" stroke="#000" stroke-width="2"/></svg></div>
<div class="t" style="left:4px;top:448px;width:80px;height:25px;line-height:25px;color:#fff"><span class="c">英超</span></div>
<div class="t" style="left:85px;top:448px;width:74px;height:25px;line-height:25px;">25-02-22</div>
<div class="t" style="left:160px;top:448px;width:108px;height:25px;line-height:25px;"><span style="color:#167816"><span class="c">莱斯特城</span></span></div>
<div class="t" style="left:269px;top:448px;width:87px;height:25px;line-height:25px;"><span style="color:#cc1a2a">0-4</span>(0-3)</div>
<div class="t" style="left:357px;top:448px;width:36px;height:25px;line-height:25px;">5-6</div>
<div class="t" style="left:394px;top:448px;width:127px;height:25px;line-height:25px;"><span class="c">布伦特福德</span></div>
<div class="t" style="left:522px;top:448px;width:42px;height:25px;line-height:25px;">0.93</div>
<div class="t" style="left:565px;top:448px;width:92px;height:25px;line-height:25px;"><span class="c">受半球</span></div>
<div class="t" style="left:658px;top:448px;width:44px;height:25px;line-height:25px;">0.96</div>
<div class="t" style="left:703px;top:448px;width:64px;height:25px;line-height:25px;">3.56</div>
<div class="t" style="left:768px;top:448px;width:64px;height:25px;line-height:25px;">3.75</div>
<div class="t" style="left:833px;top:448px;width:65px;height:25px;line-height:25px;">1.99</div>
<div class="t" style="left:899px;top:448px;width:36px;height:25px;line-height:25px;"><span style="color:#1818b0"><span class="c">负</span></span></div>
<div class="t" style="left:936px;top:448px;width:37px;height:25px;line-height:25px;"><span style="color:#1818b0"><span class="c">输</span></span></div>
<div class="t" style="left:974px;top:448px;width:56px;height:25px;line-height:25px;"><span style="color:#e01818"><span class="c">大</span></span></div>
<div class="t" style="left:4px;top:474px;width:80px;height:25px;line-height:25px;color:#fff"><span class="c">英超</span></div>
<div class="t" style="left:85px;top:474px;width:74px;height:25px;line-height:25px;">25-02-15</div>
<div class="t" style="left:160px;top:474px;width:108px;height:25px;line-height:25px;"><span style="color:#167816"><span class="c">莱斯特城</span></span></div>
<div class="t" style="left:269px;top:474px;width:87px;height:25px;line-height:25px;"><span style="color:#cc1a2a">0-2</span>(0-0)</div>
<div class="t" style="left:357px;top:474px;width:36px;height:25px;line-height:25px;">3-7</div>
<div class="t" style="left:394px;top:474px;width:127px;height:25px;line-height:25px;"><span class="c">阿森纳</span></div>
<div class="t" style="left:522px;top:474px;width:42px;height:25px;line-height:25px;">0.90</div>
<div class="t" style="left:565px;top:474px;width:92px;height:25px;line-height:25px;"><span class="c">受球半</span></div>
<div class="t" style="left:658px;top:474px;width:44px;height:25px;line-height:25px;">0.99</div>
<div class="t" style="left:703px;top:474px;width:64px;height:25px;line-height:25px;">9.78</div>
<div class="t" style="left:768px;top:474px;width:64px;height:25px;line-height:25px;">5.42</div>
<div class="t" style="left:833px;top:474px;width:65px;height:25px;line-height:25px;">1.31</div>
<div class="t" style="left:899px;top:474px;width:36px;height:25px;line-height:25px;"><span style="color:#1818b0"><span class="c">负</span></span></div>
<div class="t" style="left:936px;top:474px;width:37px;height:25px;line-height:25px;"><span style="color:#1818b0"><span class="c">输</span></span></div>
<div class="t" style="left:974px;top:474px;width:56px;height:25px;line-height:25px;"><span style="color:#1818b0"><span class="c">小</span></span></div>
<div class="t" style="left:4px;top:500px;width:80px;height:25px;line-height:25px;color:#fff"><span class="c">英足总杯</span></div>
<div class="t" style="left:85px;top:500px;width:74px;height:25px;line-height:25px;">25-02-08</div>
<div class="t" style="left:160px;top:500px;width:108px;height:25px;line-height:25px;"><span class="c">曼彻斯特联</span></div>
<div class="t" style="left:269px;top:500px;width:87px;height:25px;line-height:25px;"><span style="color:#cc1a2a">2-1</span>(0-1)</div>
<div class="t" style="left:357px;top:500px;width:36px;height:25px;line-height:25px;">6-1</div>
<div class="t" style="left:394px;top:500px;width:127px;height:25px;line-height:25px;"><span style="color:#167816"><span class="c">莱斯特城</span></span></div>
<div class="t" style="left:522px;top:500px;width:42px;height:25px;line-height:25px;">1.05</div>
<div class="t" style="left:565px;top:500px;width:92px;height:25px;line-height:25px;"><span class="c">球半</span>/<span class="c">两</span></div>
<div class="t" style="left:658px;top:500px;width:44px;height:25px;line-height:25px;">0.84</div>
<div class="t" style="left:703px;top:500px;width:64px;height:25px;line-height:25px;">1.29</div>
<div class="t" style="left:768px;top:500px;width:64px;height:25px;line-height:25px;">5.75</div>
<div class="t" style="left:833px;top:500px;width:65px;height:25px;line-height:25px;">8.61</div>
<div class="t" style="left:899px;top:500px;width:36px;height:25px;line-height:25px;"><span style="color:#1818b0"><span class="c">负</span></span></div>
<div class="t" style="left:936px;top:500px;width:37px;height:25px;line-height:25px;"><span style="color:#e01818"><span class="c">赢</span></span></div>
<div class="t" style="left:974px;top:500px;width:56px;height:25px;line-height:25px;"><span style="color:#1818b0"><span class="c">小</span></span></div>
<div class="t" style="left:4px;top:526px;width:80px;height:25px;line-height:25px;color:#fff"><span class="c">英超</span></div>
<div class="t" style="left:85px;top:526px;width:74px;height:25px;line-height:25px;">25-02-01</div>
<div class="t" style="left:160px;top:526px;width:108px;height:25px;line-height:25px;"><span class="c">埃弗顿</span></div>
<div class="t" style="left:269px;top:526px;width:87px;height:25px;line-height:25px;"><span style="color:#cc1a2a">4-0</span>(3-0)</div>
<div class="t" style="left:357px;top:526px;width:36px;height:25px;line-height:25px;">5-6</div>
<div class="t" style="left:394px;top:526px;width:127px;height:25px;line-height:25px;"><span style="color:#167816"><span class="c">莱斯特城</span></span></div>
<div class="t" style="left:522px;top:526px;width:42px;height:25px;line-height:25px;">1.01</div>
<div class="t" style="left:565px;top:526px;width:92px;height:25px;line-height:25px;"><span class="c">半球</span></div>
<div class="t" style="left:658px;top:526px;width:44px;height:25px;line-height:25px;">0.88</div>
<div class="t" style="left:703px;top:526px;width:64px;height:25px;line-height:25px;">1.92</div>
<div class="t" style="left:768px;top:526px;width:64px;height:25px;line-height:25px;">3.36</div>
<div class="t" style="left:833px;top:526px;width:65px;height:25px;line-height:25px;">4.28</div>
<div class="t" style="left:899px;top:526px;width:36px;height:25px;line-height:25px;"><span style="color:#1818b0"><span class="c">负</span></span></div>
<div class="t" style="left:936px;top:526px;width:37px;height:25px;line-height:25px;"><span style="color:#1818b0"><span class="c">输</span></span></div>
<div class="t" style="left:974px;top:526px;width:56px;height:25px;line-height:25px;"><span style="color:#e01818"><span class="c">大</span></span></div>
<div class="t" style="left:4px;top:552px;width:80px;height:25px;line-height:25px;color:#fff"><span class="c">英超</span></div>
<div class="t" style="left:85px;top:552px;width:74px;height:25px;line-height:25px;">25-01-26</div>
<div class="t" style="left:160px;top:552px;width:108px;height:25px;line-height:25px;"><span class="c">托特纳姆热刺</span></div>
<div class="t" style="left:269px;top:552px;width:87px;height:25px;line-height:25px;"><span style="color:#cc1a2a">1-2</span>(1-0)</div>
<div class="t" style="left:357px;top:552px;width:36px;height:25px;line-height:25px;">6-4</div>
<div class="t" style="left:394px;top:552px;width:127px;height:25px;line-height:25px;"><span style="color:#167816"><span class="c">莱斯特城</span></span></div>
<div class="t" style="left:522px;top:552px;width:42px;height:25px;line-height:25px;">1.07</div>
<div class="t" style="left:565px;top:552px;width:92px;height:25px;line-height:25px;"><span class="c">一</span>/<span class="c">球半</span></div>
<div class="t" style="left:658px;top:552px;width:44px;height:25px;line-height:25px;">0.82</div>
<div class="t" style="left:703px;top:552px;width:64px;height:25px;line-height:25px;">1.51</div>
<div class="t" style="left:768px;top:552px;width:64px;height:25px;line-height:25px;">4.90</div>
<div class="t" style="left:833px;top:552px;width:65px;height:25px;line-height:25px;">5.38</div>
<div class="t" style="left:899px;top:552px;width:36px;height:25px;line-height:25px;"><span style="color:#e01818"><span class="c">胜</span></span></div>
<div class="t" style="left:936px;top:552px;width:37px;height:25px;line-height:25px;"><span style="color:#e01818"><span class="c">赢</span></span></div>
<div class="t" style="left:974px;top:552px;width:56px;height:25px;line-height:25px;"><span style="color:#1818b0"><span class="c">小</span></span></div>
<div class="t" style="left:4px;top:578px;width:80px;height:25px;line-height:25px;color:#fff"><span class="c">英超</span></div>
<div class="t" style="left:85px;top:578px;width:74px;height:25px;line-height:25px;">25-01-18</div>
<div class="t" style="left:160px;top:578px;width:108px;height:25px;line-height:25px;"><span style="color:#167816"><span class="c">莱斯特城</span></span></div>
<div class="t" style="left:269px;top:578px;width:87px;height:25px;line-height:25px;"><span style="color:#cc1a2a">0-2</span>(0-0)</div>
<div class="t" style="left:357px;top:578px;width:36px;height:25px;line-height:25px;">5-2</div>
<div class="t" style="left:394px;top:578px;width:127px;height:25px;line-height:25px;"><span class="c">富勒姆</span></div>
<div class="t" style="left:522px;top:578px;width:42px;height:25px;line-height:25px;">0.83</div>
<div class="t" style="left:565px;top:578px;width:92px;height:25px;line-height:25px;"><span class="c">受半</span>/<span class="c">一</span></div>
<div class="t" style="left:658px;top:578px;width:44px;height:25px;line-height:25px;">1.06</div>
<div class="t" style="left:703px;top:578px;width:64px;height:25px;line-height:25px;">4.41</div>
<div class="t" style="left:768px;top:578px;width:64px;height:25px;line-height:25px;">3.74</div>
<div class="t" style="left:833px;top:578px;width:65px;height:25px;line-height:25px;">1.79</div>
<div class="t" style="left:899px;top:578px;width:36px;height:25px;line-height:25px;"><span style="color:#1818b0"><span class="c">负</span></span></div>
<div class="t" style="left:936px;top:578px;width:37px;height:25px;line-height:25px;"><span style="color:#1818b0"><span class="c">输</span></span></div>
<div class="t" style="left:974px;top:578px;width:56px;height:25px;line-height:25px;"><span style="color:#1818b0"><span class="c">小</span></span></div>
<div class="t" style="left:4px;top:604px;width:80px;height:25px;line-height:25px;color:#fff"><span class="c">英超</span></div>
<div class="t" style="left:85px;top:604px;width:74px;height:25px;line-height:25px;">25-01-16</div>
<div class="t" style="left:160px;top:604px;width:108px;height:25px;line-height:25px;"><span style="color:#167816"><span class="c">莱斯特城</span></span></div>
<div class="t" style="left:269px;top:604px;width:87px;height:25px;line-height:25px;"><span style="color:#cc1a2a">0-2</span>(0-0)</div>
<div class="t" style="left:357px;top:604px;width:36px;height:25px;line-height:25px;">4-3</div>
<div class="t" style="left:394px;top:604px;width:127px;height:25px;line-height:25px;"><span class="c">水晶宫</span></div>
<div class="t" style="left:522px;top:604px;width:42px;height:25px;line-height:25px;">0.92</div>
<div class="t" style="left:565px;top:604px;width:92px;height:25px;line-height:25px;"><span class="c">受半球</span></div>
<div class="t" style="left:658px;top:604px;width:44px;height:25px;line-height:25px;">0.97</div>
<div class="t" style="left:703px;top:604px;width:64px;height:25px;line-height:25px;">3.83</div>
<div class="t" style="left:768px;top:604px;width:64px;height:25px;line-height:25px;">3.61</div>
<div class="t" style="left:833px;top:604px;width:65px;height:25px;line-height:25px;">1.94</div>
<div class="t" style="left:899px;top:604px;width:36px;height:25px;line-height:25px;"><span style="color:#1818b0"><span class="c">负</span></span></div>
<div class="t" style="left:936px;top:604px;width:37px;height:25px;line-height:25px;"><span style="color:#1818b0"><span class="c">输</span></span></div>
<div class="t" style="left:974px;top:604px;width:56px;height:25px;line-height:25px;"><span style="color:#1818b0"><span class="c">小</span></span></div>
<div class="t" style="left:4px;top:630px;width:80px;height:25px;line-height:25px;color:#fff"><span class="c">英足总杯</span></div>
<div class="t" style="left:85px;top:630px;width:74px;height:25px;line-height:25px;">25-01-11</div>
<div class="t" style="left:160px;top:630px;width:108px;height:25px;line-height:25px;"><span style="color:#167816"><span class="c">莱斯特城</span></span></div>
<div class="t" style="left:269px;top:630px;width:87px;height:25px;line-height:25px;"><span style="color:#cc1a2a">6-2</span>(3-2)</div>
<div class="t" style="left:357px;top:630px;width:36px;height:25px;line-height:25px;">2-6</div>
<div class="t" style="left:394px;top:630px;width:127px;height:25px;line-height:25px;"><span class="c">女王公园巡游者</span></div>
<div class="t" style="left:522px;top:630px;width:42px;height:25px;line-height:25px;">1.02</div>
<div class="t" style="left:565px;top:630px;width:92px;height:25px;line-height:25px;"><span class="c">一</span>/<span class="c">球半</span></div>
<div class="t" style="left:658px;top:630px;width:44px;height:25px;line-height:25px;">0.86</div>
<div class="t" style="left:703px;top:630px;width:64px;height:25px;line-height:25px;">1.54</div>
<div class="t" style="left:768px;top:630px;width:64px;height:25px;line-height:25px;">4.30</div>
<div class="t" style="left:833px;top:630px;width:65px;height:25px;line-height:25px;">5.57</div>
<div class="t" style="left:899px;top:630px;width:36px;height:25px;line-height:25px;"><span style="color:#e01818"><span class="c">胜</span></span></div>
<div class="t" style="left:936px;top:630px;width:37px;height:25px;line-height:25px;"><span style="color:#e01818"><span class="c">赢</span></span></div>
<div class="t" style="left:974px;top:630px;width:56px;height:25px;line-height:25px;"><span style="color:#e01818"><span class="c">大</span></span></div>
<div class="t" style="left:4px;top:656px;width:80px;height:25px;line-height:25px;color:#fff"><span class="c">英超</span></div>
<div class="t" style="left:85px;top:656px;width:74px;height:25px;line-height:25px;">25-01-04</div>
<div class="t" style="left:160px;top:656px;width:108px;height:25px;line-height:25px;"><span class="c">阿斯顿维拉</span></div>
<div class="t" style="left:269px;top:656px;width:87px;height:25px;line-height:25px;"><span style="color:#cc1a2a">2-1</span>(0-0)</div>
<div class="t" style="left:357px;top:656px;width:36px;height:25px;line-height:25px;">6-2</div>
<div class="t" style="left:394px;top:656px;width:127px;height:25px;line-height:25px;"><span style="color:#167816"><span class="c">莱斯特城</span></span></div>
<div class="t" style="left:522px;top:656px;width:42px;height:25px;line-height:25px;">0.93</div>
<div class="t" style="left:565px;top:656px;width:92px;height:25px;line-height:25px;"><span class="c">球半</span></div>
<div class="t" style="left:658px;top:656px;width:44px;height:25px;line-height:25px;">0.96</div>
<div class="t" style="left:703px;top:656px;width:64px;height:25px;line-height:25px;">1.33</div>
<div class="t" style="left:768px;top:656px;width:64px;height:25px;line-height:25px;">5.60</div>
<div class="t" style="left:833px;top:656px;width:65px;height:25px;line-height:25px;">8.37</div>
<div class="t" style="left:899px;top:656px;width:36px;height:25px;line-height:25px;"><span style="color:#1818b0"><span class="c">负</span></span></div>
<div class="t" style="left:936px;top:656px;width:37px;height:25px;line-height:25px;"><span style="color:#e01818"><span class="c">赢</span></span></div>
<div class="t" style="left:974px;top:656px;width:56px;height:25px;line-height:25px;"><span style="color:#1818b0"><span class="c">小</span></span></div>
<div class="t" style="left:4px;top:682px;width:80px;height:25px;line-height:25px;color:#fff"><span class="c">英超</span></div>
<div class="t" style="left:85px;top:682px;width:74px;height:25px;line-height:25px;">24-12-29</div>
<div class="t" style="left:160px;top:682px;width:108px;height:25px;line-height:25px;"><span style="color:#167816"><span class="c">莱斯特城</span></span></div>
<div class="t" style="left:269px;top:682px;width:87px;height:25px;line-height:25px;"><span style="color:#cc1a2a">0-2</span>(0-1)</div>
<div class="t" style="left:357px;top:682px;width:36px;height:25px;line-height:25px;">4-4</div>
<div class="t" style="left:394px;top:682px;width:127px;height:25px;line-height:25px;"><span class="c">曼彻斯特城</span></div>
<div class="t" style="left:522px;top:682px;width:42px;height:25px;line-height:25px;">0.98</div>
<div class="t" style="left:565px;top:682px;width:92px;height:25px;line-height:25px;"><span class="c">受球半</span>/<span class="c">两</span></div>
<div class="t" style="left:658px;top:682px;width:44px;height:25px;line-height:25px;">0.91</div>
<div class="t" style="left:703px;top:682px;width:64px;height:25px;line-height:25px;">9.45</div>
<div class="t" style="left:768px;top:682px;width:64px;height:25px;line-height:25px;">6.28</div>
<div class="t" style="left:833px;top:682px;width:65px;height:25px;line-height:25px;">1.27</div>
<div class="t" style="left:899px;top:682px;width:36px;height:25px;line-height:25px;"><span style="color:#1818b0"><span class="c">负</span></span></div>
<div class="t" style="left:936px;top:682px;width:37px;height:25px;line-height:25px;"><span style="color:#1818b0"><span class="c">输</span></span></div>
<div class="t" style="left:974px;top:682px;width:56px;height:25px;line-height:25px;"><span style="color:#1818b0"><span class="c">小</span></span></div>
<div class="t" style="left:3px;top:707px;width:1028px;height:25px;line-height:25px;white-space:nowrap;letter-spacing:0.22px"><span class="c">近</span><span style="color:#d42020">10</span><span class="c">场</span>,<span class="c">胜</span>2<span class="c">平</span>0<span class="c">负</span>8, <span class="c">胜率</span>:<span style="color:#d42020">20%</span> <span class="c">让胜率</span>:<span style="color:#d42020">40%</span> <span class="c">大率</span>:<span style="color:#d42020">30%</span> <span class="c">单率</span>:<span style="color:#d42020">30%</span></div>
</body></html>
